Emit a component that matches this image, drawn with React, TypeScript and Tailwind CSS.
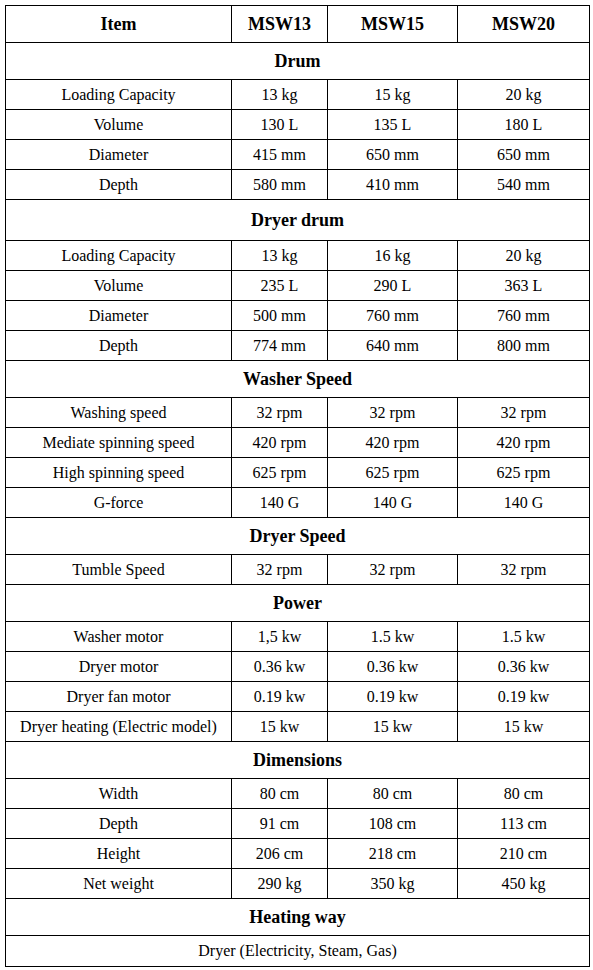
import React from 'react'

// Spec sheet — MSW washer/dryer stack

type Row = [string, string, string, string]

interface Section {
  title: string
  tall?: boolean
  rows: Row[]
}

const SECTIONS: Section[] = [
  {
    title: 'Drum',
    rows: [
      ['Loading Capacity', '13 kg', '15 kg', '20 kg'],
      ['Volume', '130 L', '135 L', '180 L'],
      ['Diameter', '415 mm', '650 mm', '650 mm'],
      ['Depth', '580 mm', '410 mm', '540 mm'],
    ],
  },
  {
    title: 'Dryer drum',
    tall: true,
    rows: [
      ['Loading Capacity', '13 kg', '16 kg', '20 kg'],
      ['Volume', '235 L', '290 L', '363 L'],
      ['Diameter', '500 mm', '760 mm', '760 mm'],
      ['Depth', '774 mm', '640 mm', '800 mm'],
    ],
  },
  {
    title: 'Washer Speed',
    rows: [
      ['Washing speed', '32 rpm', '32 rpm', '32 rpm'],
      ['Mediate spinning speed', '420 rpm', '420 rpm', '420 rpm'],
      ['High spinning speed', '625 rpm', '625 rpm', '625 rpm'],
      ['G-force', '140 G', '140 G', '140 G'],
    ],
  },
  {
    title: 'Dryer Speed',
    rows: [['Tumble Speed', '32 rpm', '32 rpm', '32 rpm']],
  },
  {
    title: 'Power',
    rows: [
      ['Washer motor', '1,5 kw', '1.5 kw', '1.5 kw'],
      ['Dryer motor', '0.36 kw', '0.36 kw', '0.36 kw'],
      ['Dryer fan motor', '0.19 kw', '0.19 kw', '0.19 kw'],
      ['Dryer heating (Electric model)', '15 kw', '15 kw', '15 kw'],
    ],
  },
  {
    title: 'Dimensions',
    rows: [
      ['Width', '80 cm', '80 cm', '80 cm'],
      ['Depth', '91 cm', '108 cm', '113 cm'],
      ['Height', '206 cm', '218 cm', '210 cm'],
      ['Net weight', '290 kg', '350 kg', '450 kg'],
    ],
  },
]

const cell = 'flex items-center justify-center border-r border-b border-black'

export default function App() {
  return (
    <div className="min-h-screen bg-white pl-[5px] pt-[5px] font-['Liberation_Serif','Times_New_Roman',serif] text-black">
      <div className="grid w-[585px] grid-cols-[226px_96px_130px_132px] border-l border-t border-black">
        {/* header */}
        {['Item', 'MSW13', 'MSW15', 'MSW20'].map((h) => (
          <div key={h} className={`${cell} h-[37px] text-[18px] font-bold`}>
            {h}
          </div>
        ))}

        {SECTIONS.map((s) => (
          <React.Fragment key={s.title}>
            <div className={`${cell} col-span-4 ${s.tall ? 'h-[41px]' : 'h-[37px]'} text-[18px] font-bold`}>
              {s.title}
            </div>
            {s.rows.map((r, i) =>
              r.map((v, j) => (
                <div key={`${s.title}-${i}-${j}`} className={`${cell} h-[30px] text-[16px]`}>
                  {v}
                </div>
              ))
            )}
          </React.Fragment>
        ))}

        <div className={`${cell} col-span-4 h-[37px] text-[18px] font-bold`}>Heating way</div>
        <div className={`${cell} col-span-4 h-[31px] text-[16px]`}>Dryer (Electricity, Steam, Gas)</div>
      </div>
    </div>
  )
}
